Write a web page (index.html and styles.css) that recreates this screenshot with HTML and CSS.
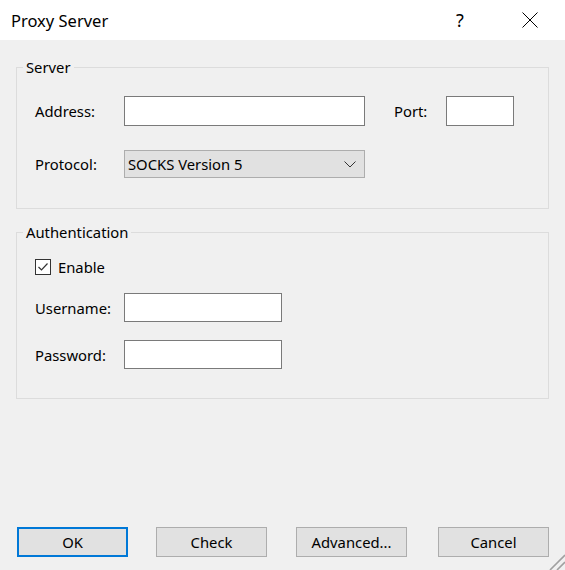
FILE: index.html
```html
<!DOCTYPE html>
<html lang="en">
<head>
  <meta charset="UTF-8">
  <title>Proxy Server</title>
  <link rel="stylesheet" href="styles.css">
</head>
<body>
  <div class="dialog">
    <header class="titlebar">
      <span class="title">Proxy Server</span>
      <span class="cap-btn help">?</span>
      <span class="cap-btn close">
        <svg width="16" height="16" viewBox="0 0 16 16"><path d="M0.5 0.5 L15.5 15.5 M15.5 0.5 L0.5 15.5" stroke="#000" stroke-width="1" fill="none"/></svg>
      </span>
    </header>

    <main class="content">
      <fieldset class="group group-server">
        <legend>Server</legend>
        <div class="row row-first">
          <label class="lbl" for="address">Address:</label>
          <input class="field field-address" id="address" type="text">
          <label class="lbl-port" for="port">Port:</label>
          <input class="field field-port" id="port" type="text">
        </div>
        <div class="row row-protocol">
          <span class="lbl">Protocol:</span>
          <div class="select">
            <span>SOCKS Version 5</span>
            <svg width="12" height="7" viewBox="0 0 12 7"><path d="M0.5 0.5 L6 6 L11.5 0.5" stroke="#333" stroke-width="1" fill="none"/></svg>
          </div>
        </div>
      </fieldset>

      <fieldset class="group group-auth">
        <legend>Authentication</legend>
        <div class="row row-check">
          <span class="checkbox">
            <svg width="14" height="14" viewBox="0 0 14 14"><path d="M2.5 7 L5.5 10 L11.5 3.5" stroke="#333" stroke-width="1.2" fill="none"/></svg>
          </span>
          <span>Enable</span>
        </div>
        <div class="row row-user">
          <label class="lbl" for="user">Username:</label>
          <input class="field field-auth" id="user" type="text">
        </div>
        <div class="row row-pass">
          <label class="lbl" for="pass">Password:</label>
          <input class="field field-auth" id="pass" type="password">
        </div>
      </fieldset>
    </main>

    <footer class="buttons">
      <button class="btn btn-default">OK</button>
      <button class="btn btn-check">Check</button>
      <button class="btn btn-advanced">Advanced...</button>
      <button class="btn btn-cancel">Cancel</button>
    </footer>

    <svg class="grip" width="16" height="16" viewBox="0 0 16 16"><path d="M16 1 L1 16 M16 8 L8 16" stroke="#a0a0a0" stroke-width="1.6" fill="none"/></svg>
  </div>
</body>
</html>
```

FILE: styles.css
```css
body { margin: 0; font-family: "Noto Sans", "Open Sans", sans-serif; font-size: 14.8px; color: #000; background: #f0f0f0; }
.dialog { width: 565px; height: 570px; display: flex; flex-direction: column; position: relative; overflow: hidden; }

.titlebar { height: 40px; box-sizing: border-box; background: #fff; display: flex; align-items: center; padding: 0 25px 0 11px; }
.title { flex: 1; font-size: 16.5px; }
.cap-btn { width: 20px; display: flex; justify-content: center; }
.help { font-size: 18px; color: #000; margin-right: 50px; }

.content { padding: 0 16px; display: flex; flex-direction: column; }
.group { margin: 0; padding: 0; border: 1px solid #dcdcdc; min-width: 0; }
.group legend { margin-left: 6px; padding: 0 3px; line-height: 20px; }
.group-server { margin-top: 17px; padding-bottom: 30px; }
.group-auth { margin-top: 13px; padding-bottom: 29px; }

.row { display: flex; align-items: center; padding-left: 18px; }
.lbl { width: 89px; }
.lbl-port { width: 52px; margin-left: 29px; }
.row-first { margin-top: 19px; height: 30px; }
.row-protocol { margin-top: 24px; height: 28px; }
.row-check { margin-top: 15px; height: 20px; gap: 7px; }
.row-user { margin-top: 16px; height: 29px; }
.row-pass { margin-top: 18px; height: 29px; }

.field { box-sizing: border-box; height: 100%; margin: 0; border: 1px solid #7a7a7a; background: #fff; padding: 0 3px; font: inherit; }
.field-address { width: 241px; }
.field-port { width: 68px; }
.field-auth { width: 158px; }

.select { box-sizing: border-box; width: 241px; height: 28px; display: flex; align-items: center; justify-content: space-between; padding: 0 8px 0 3px; background: #e1e1e1; border: 1px solid #adadad; }

.checkbox { box-sizing: border-box; width: 16px; height: 16px; border: 1px solid #333; background: #fff; display: flex; align-items: center; justify-content: center; }

.buttons { margin-top: auto; padding: 0 0 13px 17px; display: flex; }
.btn { box-sizing: border-box; width: 111px; height: 30px; margin: 0; padding: 0; background: #e1e1e1; border: 1px solid #adadad; font: inherit; color: #000; }
.btn-default { border: 2px solid #0078d7; }
.btn-check { margin-left: 28px; }
.btn-advanced { margin-left: 29px; }
.btn-cancel { margin-left: 31px; }

.grip { position: absolute; right: 0; bottom: 0; }
```
